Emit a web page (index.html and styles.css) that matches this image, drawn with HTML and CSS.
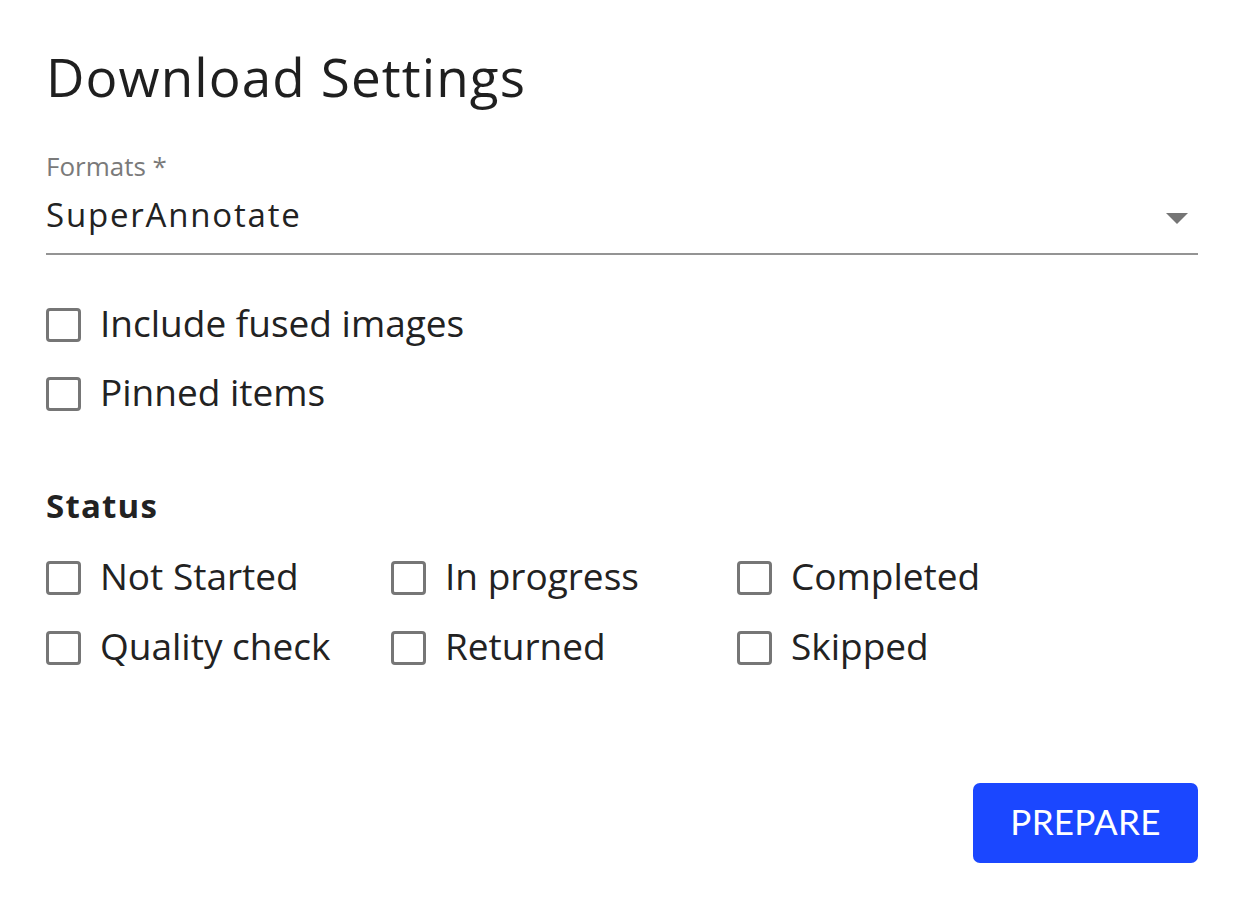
FILE: index.html
```html
<!DOCTYPE html>
<html>
<head>
<meta charset="utf-8">
<link rel="stylesheet" href="styles.css">
</head>
<body>
<div class="dialog">
  <h1 class="title">Download Settings</h1>
  <div class="field">
    <label class="field-label">Formats *</label>
    <div class="select">
      <span class="select-value">SuperAnnotate</span>
      <svg class="select-arrow" width="22" height="11" viewBox="0 0 22 11"><path d="M0 0 L22 0 L11 11 Z" fill="#757575"/></svg>
    </div>
  </div>
  <div class="options">
    <label class="check"><span class="box"></span><span class="check-text">Include fused images</span></label>
    <label class="check"><span class="box"></span><span class="check-text">Pinned items</span></label>
  </div>
  <h2 class="section">Status</h2>
  <div class="status-grid">
    <label class="check"><span class="box"></span><span class="check-text">Not Started</span></label>
    <label class="check"><span class="box"></span><span class="check-text">In progress</span></label>
    <label class="check"><span class="box"></span><span class="check-text">Completed</span></label>
    <label class="check"><span class="box"></span><span class="check-text">Quality check</span></label>
    <label class="check"><span class="box"></span><span class="check-text">Returned</span></label>
    <label class="check"><span class="box"></span><span class="check-text">Skipped</span></label>
  </div>
  <div class="actions">
    <button class="btn-primary">PREPARE</button>
  </div>
</div>
</body>
</html>
```
FILE: styles.css
```css
* { box-sizing: border-box; }
html, body { margin: 0; padding: 0; background: #fff; }
body {
  font-family: "Open Sans", "Noto Sans", sans-serif;
  color: #222;
}
.dialog {
  width: 1251px;
  padding: 47px 53px 0 46px;
}
.title {
  margin: 0;
  font-size: 53px;
  font-weight: 400;
  line-height: 60px;
  letter-spacing: 1.1px;
  color: #1f1f1f;
}
.field { margin-top: 44px; }
.field-label {
  display: block;
  font-size: 26px;
  line-height: 30px;
  color: #7a7a7a;
}
.select {
  display: flex;
  align-items: center;
  justify-content: space-between;
  padding: 16px 0 20px;
  border-bottom: 2px solid #949494;
}
.select-value {
  font-size: 33px;
  line-height: 36px;
  letter-spacing: 1.8px;
  color: #222;
}
.select-arrow { margin: 6px 10px 0 0; }
.options {
  margin-top: 53px;
  display: flex;
  flex-direction: column;
  gap: 35px;
}
.check {
  display: flex;
  align-items: flex-start;
  gap: 19px;
  height: 34px;
}
.box {
  width: 35px;
  height: 34px;
  border: 3px solid #767676;
  border-radius: 4px;
  flex: none;
}
.check-text {
  font-size: 37px;
  line-height: 30px;
  color: #222;
  white-space: nowrap;
}
.section {
  margin: 77px 0 0;
  font-size: 33px;
  font-weight: 700;
  line-height: 36px;
  letter-spacing: 1.2px;
  color: #222;
}
.status-grid {
  margin-top: 37px;
  display: grid;
  grid-template-columns: 345px 346px 345px;
  row-gap: 36px;
}
.actions {
  display: flex;
  justify-content: flex-end;
  margin-top: 118px;
}
.btn-primary {
  width: 225px;
  height: 80px;
  padding: 0 0 4px;
  border: none;
  border-radius: 7px;
  background: #1b47ff;
  color: #fff;
  font-family: "Lato", sans-serif;
  font-size: 35px;
  letter-spacing: 0.3px;
}
```
